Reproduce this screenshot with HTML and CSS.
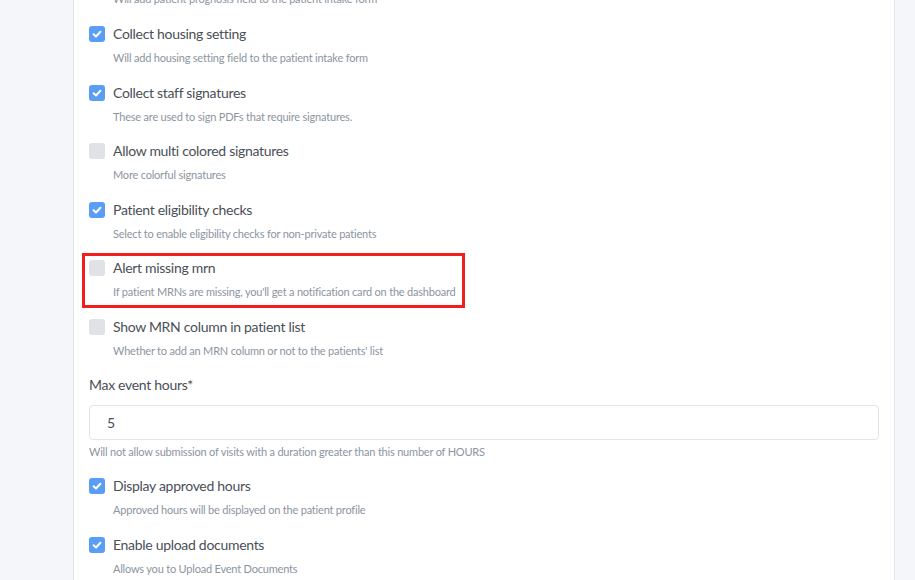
FILE: index.html
```html
<!DOCTYPE html>
<html>
<head>
<meta charset="utf-8">
<link rel="stylesheet" href="styles.css">
</head>
<body>
<div class="page">
  <div class="card">
    <div class="settings">
      <div class="item">
        <div class="row"><span class="box on"><svg viewBox="0 0 16 16"><path d="M4.6 8.3 L7 10.5 L11.4 5.8"/></svg></span><span class="label">Collect patient prognosis</span></div>
        <div class="desc">Will add patient prognosis field to the patient intake form</div>
      </div>
      <div class="item">
        <div class="row"><span class="box on"><svg viewBox="0 0 16 16"><path d="M4.6 8.3 L7 10.5 L11.4 5.8"/></svg></span><span class="label">Collect housing setting</span></div>
        <div class="desc">Will add housing setting field to the patient intake form</div>
      </div>
      <div class="item">
        <div class="row"><span class="box on"><svg viewBox="0 0 16 16"><path d="M4.6 8.3 L7 10.5 L11.4 5.8"/></svg></span><span class="label">Collect staff signatures</span></div>
        <div class="desc">These are used to sign PDFs that require signatures.</div>
      </div>
      <div class="item">
        <div class="row"><span class="box"></span><span class="label">Allow multi colored signatures</span></div>
        <div class="desc">More colorful signatures</div>
      </div>
      <div class="item">
        <div class="row"><span class="box on"><svg viewBox="0 0 16 16"><path d="M4.6 8.3 L7 10.5 L11.4 5.8"/></svg></span><span class="label">Patient eligibility checks</span></div>
        <div class="desc">Select to enable eligibility checks for non-private patients</div>
      </div>
      <div class="item highlighted">
        <div class="row"><span class="box"></span><span class="label">Alert missing mrn</span></div>
        <div class="desc">If patient MRNs are missing, you'll get a notification card on the dashboard</div>
        <div class="mark"></div>
      </div>
      <div class="item">
        <div class="row"><span class="box"></span><span class="label">Show MRN column in patient list</span></div>
        <div class="desc">Whether to add an MRN column or not to the patients' list</div>
      </div>
      <div class="field">
        <div class="field-label">Max event hours*</div>
        <div class="input">5</div>
        <div class="help">Will not allow submission of visits with a duration greater than this number of HOURS</div>
      </div>
      <div class="item">
        <div class="row"><span class="box on"><svg viewBox="0 0 16 16"><path d="M4.6 8.3 L7 10.5 L11.4 5.8"/></svg></span><span class="label">Display approved hours</span></div>
        <div class="desc">Approved hours will be displayed on the patient profile</div>
      </div>
      <div class="item">
        <div class="row"><span class="box on"><svg viewBox="0 0 16 16"><path d="M4.6 8.3 L7 10.5 L11.4 5.8"/></svg></span><span class="label">Enable upload documents</span></div>
        <div class="desc">Allows you to Upload Event Documents</div>
      </div>
    </div>
  </div>
</div>
</body>
</html>
```
FILE: styles.css
```css
html, body {
  margin: 0;
  padding: 0;
  height: 100%;
  overflow: hidden;
}
body {
  background: #f5f6fa;
  font-family: "Lato", "Noto Sans", sans-serif;
}
.page {
  display: flex;
  height: 100%;
}
.card {
  margin-left: 73px;
  width: 822px;
  background: #ffffff;
  border-left: 1px solid #e2e4e9;
  border-right: 1px solid #e2e4e9;
  padding: 0 15px 0 15px;
  box-sizing: border-box;
  flex: none;
}
.settings {
  margin-top: -34.6px;
  display: flex;
  flex-direction: column;
}
.item {
  position: relative;
  margin-bottom: 16.6px;
}
.row {
  display: flex;
  align-items: center;
  height: 20px;
}
.box {
  width: 16px;
  height: 16px;
  border-radius: 3px;
  background: #dfe3e8;
  margin-right: 8px;
  flex: none;
  display: flex;
}
.box.on {
  background: #5a9df4;
}
.box svg {
  width: 16px;
  height: 16px;
}
.box svg path {
  fill: none;
  stroke: #ffffff;
  stroke-width: 2;
  stroke-linecap: round;
  stroke-linejoin: round;
}
.label {
  font-size: 14px;
  color: #4a4f57;
  line-height: 20px;
  letter-spacing: -0.3px;
}
.desc {
  margin-top: 6px;
  margin-left: 24px;
  font-size: 11px;
  line-height: 16px;
  color: #8b95a0;
  letter-spacing: -0.2px;
}
.mark {
  position: absolute;
  left: -7px;
  top: -5px;
  width: 383px;
  height: 55px;
  border: 3px solid #f21d1d;
  box-sizing: border-box;
}
.field {
  margin-top: -0.4px;
  margin-bottom: 16.4px;
}
.field-label {
  font-size: 14px;
  line-height: 20px;
  color: #4a4f57;
  letter-spacing: -0.3px;
}
.input {
  margin-top: 9.6px;
  height: 35px;
  box-sizing: border-box;
  border: 1px solid #dfe5ea;
  border-radius: 4px;
  padding-left: 17px;
  display: flex;
  align-items: center;
  font-size: 14px;
  color: #4a4f57;
}
.help {
  margin-top: 4px;
  font-size: 11px;
  line-height: 16px;
  color: #8b95a0;
  letter-spacing: -0.2px;
}
```
